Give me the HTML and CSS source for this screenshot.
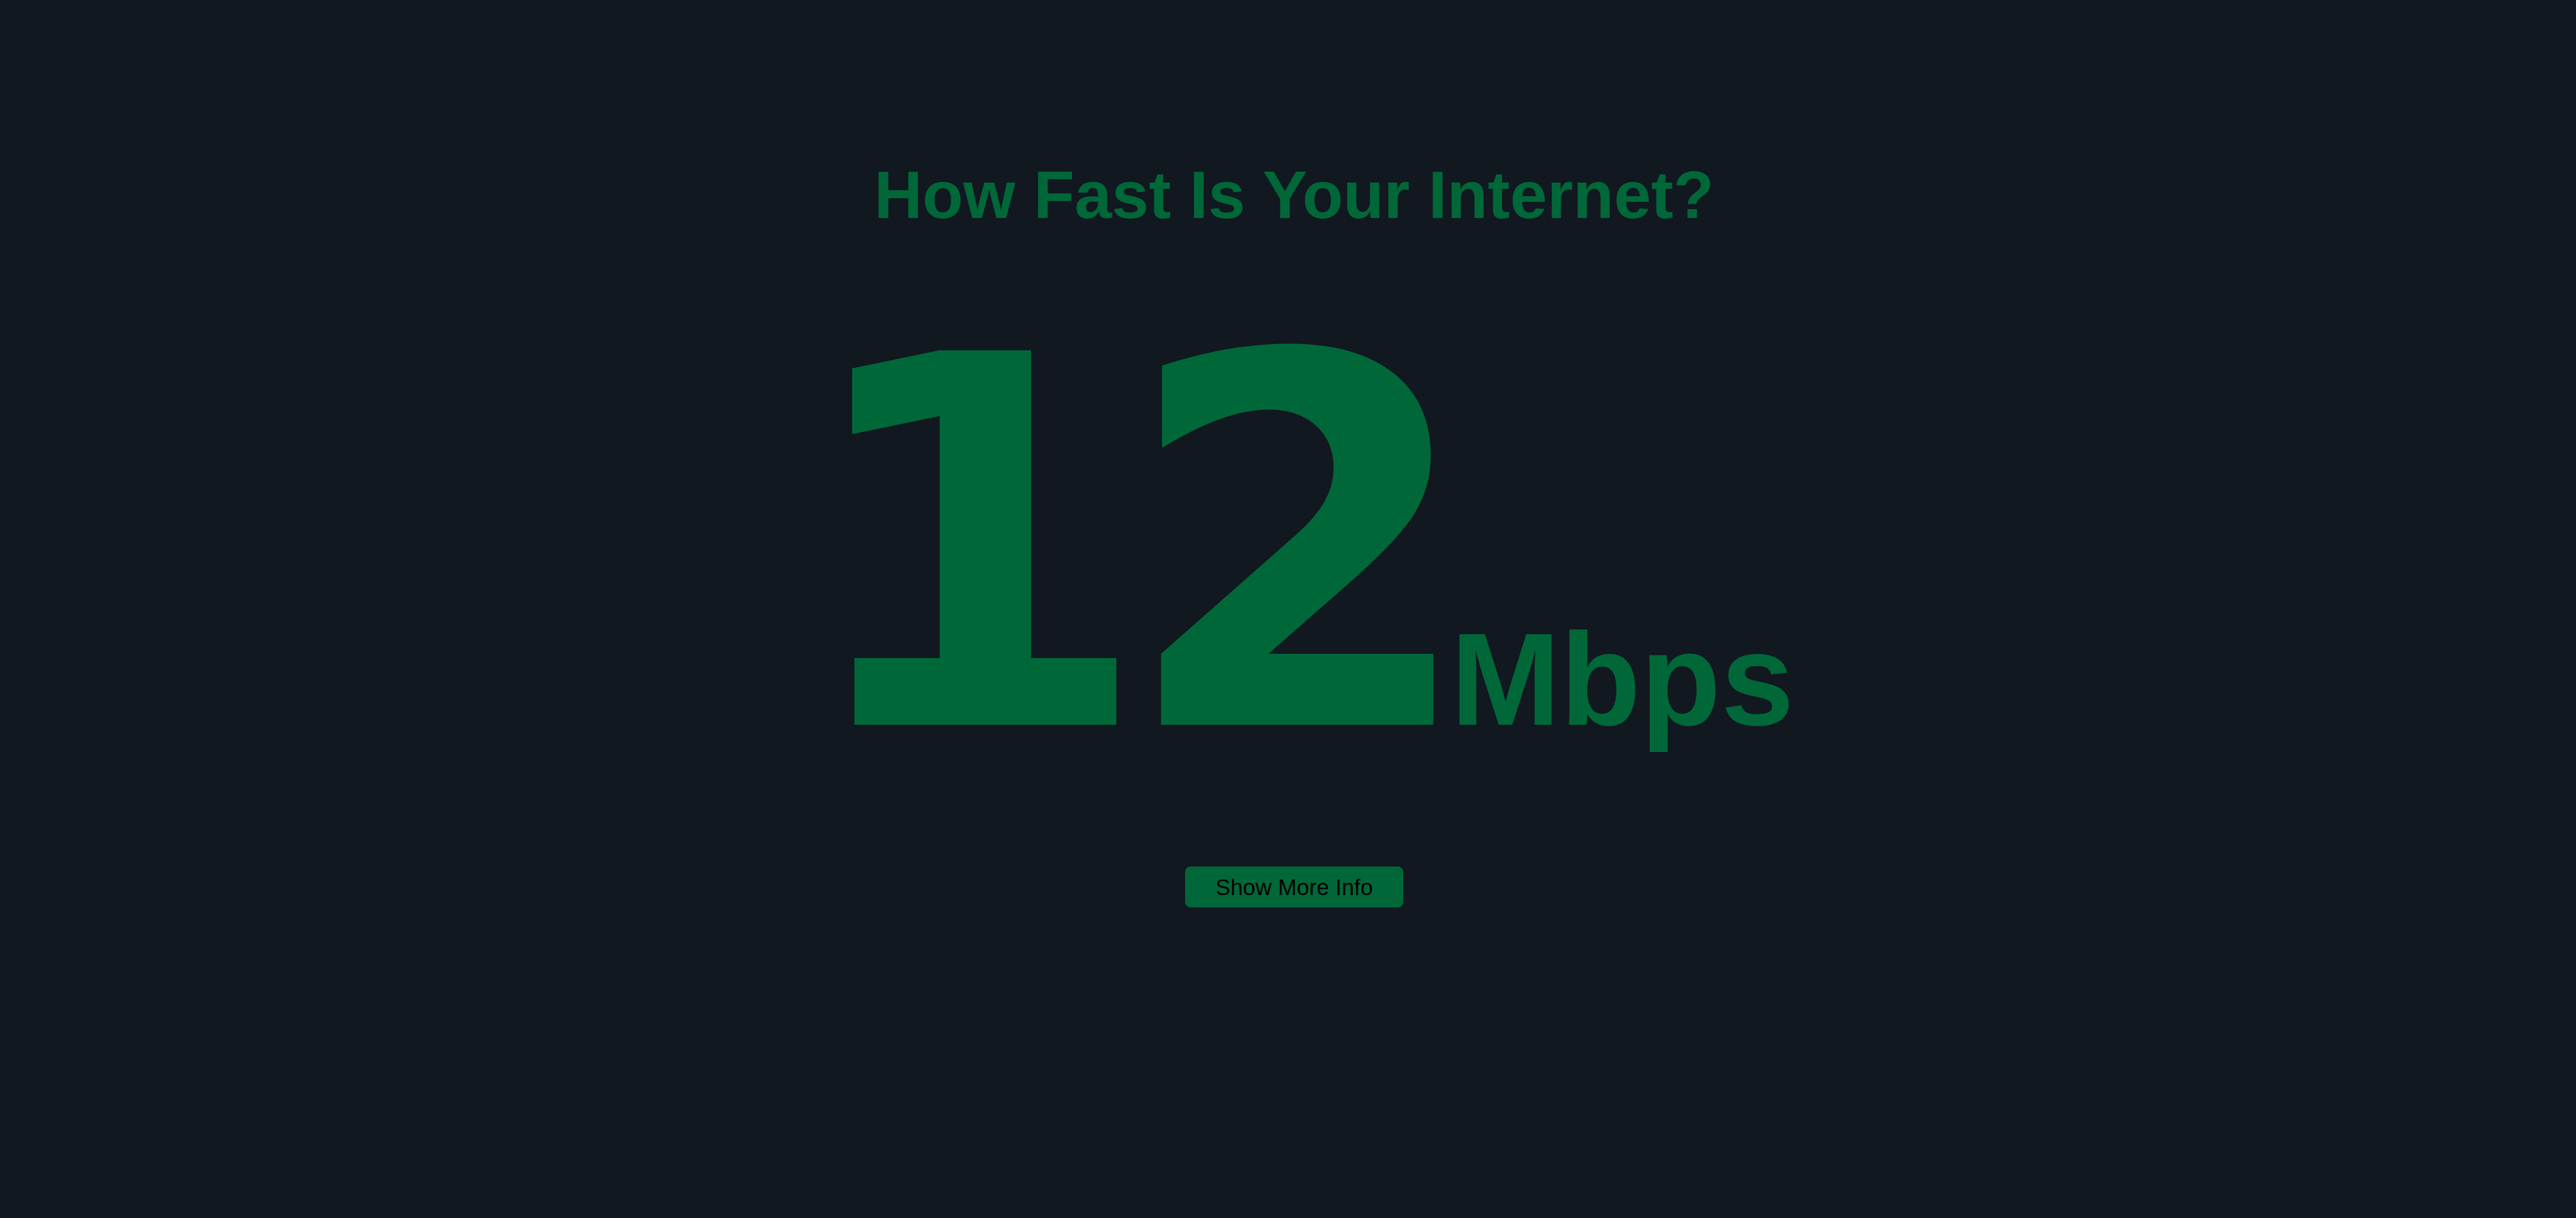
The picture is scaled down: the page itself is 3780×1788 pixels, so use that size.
FILE: index.html
```html
<!DOCTYPE html>
<html lang="en">
<head>
<meta charset="utf-8">
<title>How Fast Is Your Internet?</title>
<link rel="stylesheet" href="styles.css">
</head>
<body>
<main class="page">
  <h1 class="title">How Fast Is Your Internet?</h1>
  <div class="speed">
    <span class="speed-value">12</span>
    <span class="speed-unit">Mbps</span>
  </div>
  <button class="more-btn" type="button">Show More Info</button>
</main>
</body>
</html>
```

FILE: styles.css
```css
html, body {
  margin: 0;
  padding: 0;
  background: #111820;
  height: 100%;
}

.page {
  display: flex;
  flex-direction: column;
  align-items: center;
  padding-top: 237px;
  padding-left: 18px;
  box-sizing: border-box;
  min-height: 100%;
}

.title {
  margin: 0;
  font-family: "Liberation Sans", Arial, sans-serif;
  font-weight: 700;
  font-size: 98px;
  line-height: 1;
  color: #006838;
  letter-spacing: 0;
}

.speed {
  display: flex;
  align-items: baseline;
  margin-top: 91px;
  color: #006838;
}

.speed-value {
  font-family: "DejaVu Sans", sans-serif;
  font-weight: 700;
  font-size: 754px;
  line-height: 1;
  letter-spacing: -46px;
}

.speed-unit {
  font-family: "Liberation Sans", Arial, sans-serif;
  font-weight: 700;
  font-size: 193px;
  line-height: 1;
  margin-left: 6px;
}

.more-btn {
  margin-top: 92px;
  width: 320px;
  height: 60px;
  display: flex;
  align-items: center;
  justify-content: center;
  padding: 0;
  border: none;
  border-radius: 8px;
  background: #006838;
  color: #000000;
  font-family: "Liberation Sans", Arial, sans-serif;
  font-size: 33px;
  line-height: 1;
  cursor: pointer;
}
```
